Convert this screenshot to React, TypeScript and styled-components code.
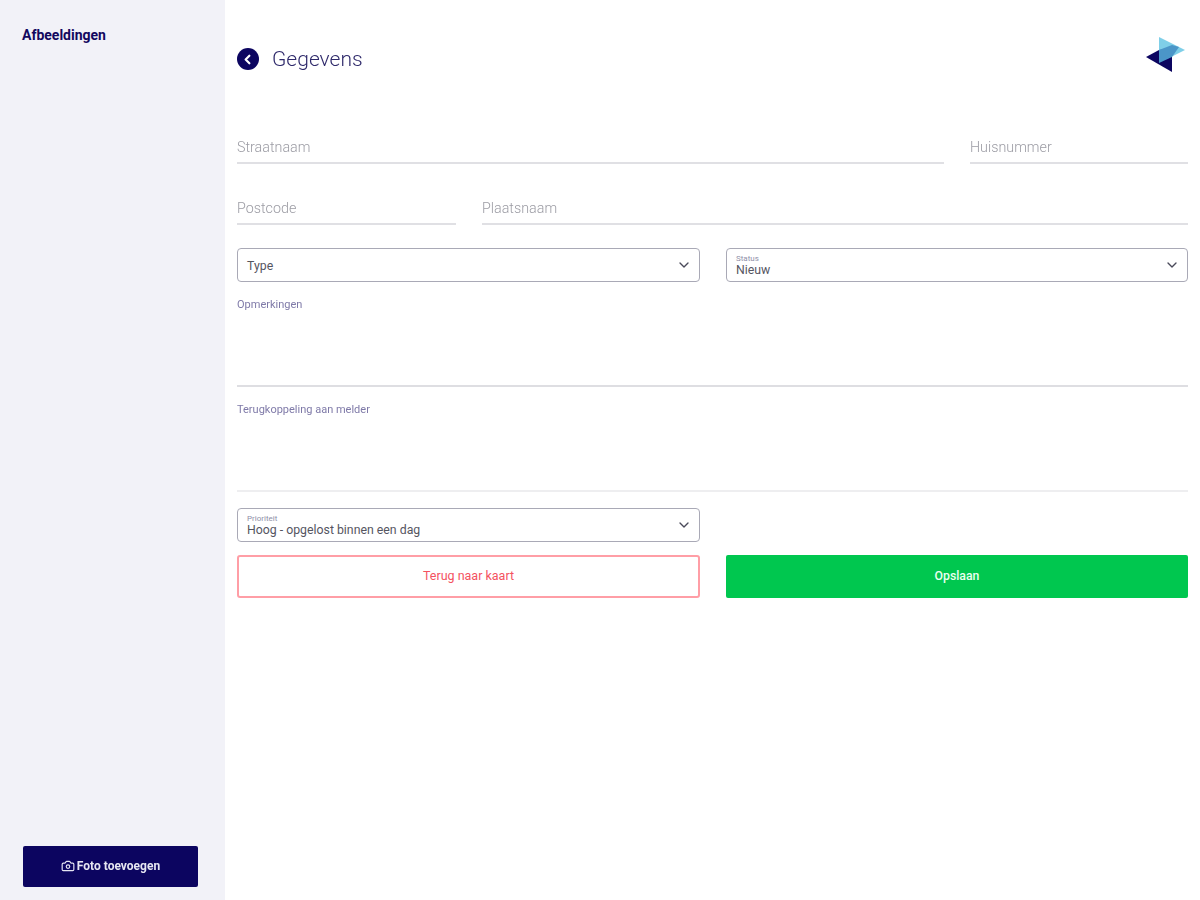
import styled, { createGlobalStyle } from "styled-components";
import { ChevronDown, ChevronLeft, Camera } from "lucide-react";

const GlobalStyle = createGlobalStyle`
  html, body {
    margin: 0;
    padding: 0;
    height: 100%;
    background: #fff;
    font-family: Roboto, "Liberation Sans", sans-serif;
  }
  * { box-sizing: border-box; }
`;

function SelectField({ label, value }: { label?: string; value: string }) {
  return (
    <SelectBox>
      <SelectText>
        {label && <SelectLabel>{label}</SelectLabel>}
        <SelectValue>{value}</SelectValue>
      </SelectText>
      <ChevronDown size={16} color="#4a4a5a" strokeWidth={2} />
    </SelectBox>
  );
}

export default function App() {
  return (
    <Page>
      <GlobalStyle />
      <Sidebar>
        <SideTitle>Afbeeldingen</SideTitle>
        <PhotoButton type="button">
          <Camera size={14} strokeWidth={2} />
          Foto toevoegen
        </PhotoButton>
      </Sidebar>

      <Main>
        <Header>
          <BackButton type="button" aria-label="Terug">
            <ChevronLeft size={15} color="#fff" strokeWidth={3.5} />
          </BackButton>
          <Title>Gegevens</Title>
          <Logo viewBox="0 0 40 36" aria-label="Logo">
            <polygon points="13,0 39,13 13,26" fill="#7fcfe8" />
            <polygon points="0,20 26,35 26,12 13,13" fill="#0c0560" />
            <polygon points="13,13 26,8 33,10 26,20 13,26" fill="#4b96c8" />
          </Logo>
        </Header>

        <AddressRow $columns="1fr 218px">
          <LineInput placeholder="Straatnaam" />
          <LineInput placeholder="Huisnummer" />
        </AddressRow>
        <CityRow $columns="219px 1fr">
          <LineInput placeholder="Postcode" />
          <LineInput placeholder="Plaatsnaam" />
        </CityRow>

        <SelectRow>
          <SelectField value="Type" />
          <SelectField label="Status" value="Nieuw" />
        </SelectRow>

        <NoteField>
          <NoteLabel>Opmerkingen</NoteLabel>
          <NoteArea $line="#dedee2" />
        </NoteField>
        <NoteField>
          <NoteLabel>Terugkoppeling aan melder</NoteLabel>
          <NoteArea $line="#eeeef0" />
        </NoteField>

        <PriorityRow>
          <SelectField label="Prioriteit" value="Hoog - opgelost binnen een dag" />
        </PriorityRow>

        <ActionRow>
          <BackToMap type="button">Terug naar kaart</BackToMap>
          <SaveButton type="button">Opslaan</SaveButton>
        </ActionRow>
      </Main>
    </Page>
  );
}

const Page = styled.div`
  display: flex;
  width: 100%;
  height: 900px;
  overflow: hidden;
  filter: blur(0.6px);
`;

const Sidebar = styled.aside`
  display: flex;
  flex-direction: column;
  justify-content: space-between;
  flex: 0 0 225px;
  height: 100%;
  padding: 27px 27px 13px 22px;
  background: #f2f2f8;
`;

const SideTitle = styled.div`
  font-size: 14px;
  line-height: 16px;
  font-weight: 700;
  color: #12085f;
`;

const PhotoButton = styled.button`
  display: flex;
  align-items: center;
  justify-content: center;
  gap: 2px;
  width: 175px;
  height: 41px;
  margin-left: 1px;
  padding: 0 0 2px;
  border: 0;
  border-radius: 2px;
  background: #0c0560;
  color: #e6e6f2;
  font-family: inherit;
  font-size: 12px;
  font-weight: 700;
`;

const Main = styled.main`
  flex: 1;
  display: flex;
  flex-direction: column;
  padding: 0 12px;
`;

const Header = styled.header`
  display: flex;
  align-items: center;
  height: 46px;
  margin-top: 36px;
`;

const BackButton = styled.button`
  display: flex;
  align-items: center;
  justify-content: center;
  width: 22px;
  height: 22px;
  padding: 0 1px 0 0;
  border: 0;
  border-radius: 50%;
  background: #0c0560;
`;

const Title = styled.h1`
  flex: 1;
  margin: 0 0 0 13px;
  font-size: 21px;
  font-weight: 300;
  color: #2f2a6b;
`;

const Logo = styled.svg`
  width: 40px;
  height: 36px;
  margin: -9px 2px 0 0;
`;

const FieldRow = styled.div<{ $columns: string }>`
  display: grid;
  grid-template-columns: ${({ $columns }) => $columns};
  column-gap: 26px;
`;

const AddressRow = styled(FieldRow)`
  margin-top: 48px;
`;

const CityRow = styled(FieldRow)`
  margin-top: 27px;
`;

const LineInput = styled.input`
  width: 100%;
  height: 34px;
  padding: 2px 0 0;
  border: 0;
  border-bottom: 2px solid #e0e0e4;
  outline: none;
  background: transparent;
  font-family: inherit;
  font-size: 14.3px;
  font-weight: 300;

  &::placeholder {
    color: #9c9ca4;
    opacity: 1;
  }
`;

const SelectRow = styled.div`
  display: grid;
  grid-template-columns: 463px 462px;
  column-gap: 26px;
  margin-top: 23px;
`;

const SelectBox = styled.div`
  display: flex;
  align-items: center;
  justify-content: space-between;
  height: 34px;
  padding: 0 7px 0 9px;
  border: 1.5px solid #a9a9b6;
  border-radius: 4px;
  background: #fff;
`;

const SelectText = styled.div`
  display: flex;
  flex-direction: column;
  justify-content: center;
  padding-top: 2px;
`;

const SelectLabel = styled.span`
  font-size: 8px;
  line-height: 8px;
  color: #8f8fa8;
`;

const SelectValue = styled.span`
  font-size: 12.3px;
  line-height: 14px;
  color: #55555f;
`;

const NoteField = styled.div`
  display: flex;
  flex-direction: column;
  margin-top: 16px;

  & + & {
    margin-top: 16px;
  }
`;

const NoteLabel = styled.label`
  font-size: 11px;
  line-height: 14px;
  color: #7f7aa8;
`;

const NoteArea = styled.textarea<{ $line: string }>`
  width: 100%;
  height: 75px;
  padding: 0;
  border: 0;
  border-bottom: 2px solid ${({ $line }) => $line};
  outline: none;
  background: transparent;
  resize: none;
  font-family: inherit;
`;

const PriorityRow = styled(SelectRow)`
  margin-top: 16px;
`;

const ActionRow = styled.div`
  display: grid;
  grid-template-columns: 463px 462px;
  column-gap: 26px;
  margin-top: 13px;
`;

const BackToMap = styled.button`
  height: 43px;
  padding: 0 0 2px;
  border: 2px solid #ff9ea6;
  border-radius: 3px;
  background: #fff;
  color: #f4525f;
  font-family: inherit;
  font-size: 12.5px;
`;

const SaveButton = styled.button`
  height: 43px;
  padding: 0 0 2px;
  border: 0;
  border-radius: 2px;
  background: #00c74f;
  color: #eafff0;
  font-family: inherit;
  font-size: 12.3px;
  font-weight: 500;
`;
